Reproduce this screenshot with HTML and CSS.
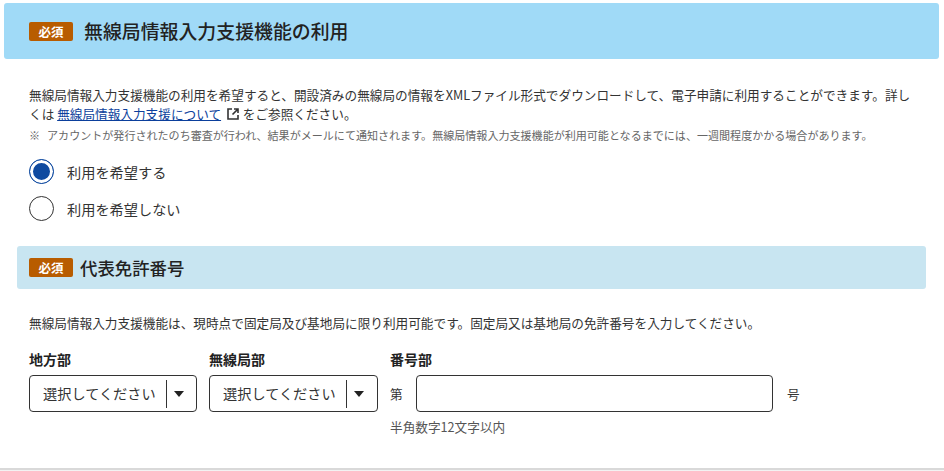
FILE: index.html
```html
<!DOCTYPE html>
<html lang="ja">
<head>
    <meta charset="UTF-8">
    <title>無線局情報入力支援機能の利用</title>
    <link rel="stylesheet" href="styles.css">
</head>
<body>
<div class="page">
    <div class="head-main">
        <span class="badge">必須</span>
        <h2 class="head-main-title">無線局情報入力支援機能の利用</h2>
    </div>

    <div class="intro">
        <p class="intro-text">無線局情報入力支援機能の利用を希望すると、開設済みの無線局の情報をXMLファイル形式でダウンロードして、電子申請に利用することができます。詳しくは <a class="link" href="#">無線局情報入力支援について</a>
            <svg class="ext-icon" viewBox="0 0 14 14" width="14" height="14" aria-hidden="true"><path d="M6 2H2v10h10V8M8 2h4v4M12 2 6.5 7.5" fill="none" stroke="#333" stroke-width="1.6"/></svg>
            をご参照ください。</p>
        <p class="note"><span class="note-mark">※</span>アカウントが発行されたのち審査が行われ、結果がメールにて通知されます。無線局情報入力支援機能が利用可能となるまでには、一週間程度かかる場合があります。</p>
    </div>

    <div class="radio-group">
        <label class="radio-row">
            <span class="radio radio-on"></span>
            利用を希望する
        </label>
        <label class="radio-row">
            <span class="radio"></span>
            利用を希望しない
        </label>
    </div>

    <div class="head-sub">
        <span class="badge">必須</span>
        <h3 class="head-sub-title">代表免許番号</h3>
    </div>

    <p class="sub-text">無線局情報入力支援機能は、現時点で固定局及び基地局に限り利用可能です。固定局又は基地局の免許番号を入力してください。</p>

    <div class="fields">
        <div class="field">
            <div class="field-label">地方部</div>
            <div class="select">
                <span class="select-text">選択してください</span>
                <span class="select-arrow"></span>
            </div>
        </div>
        <div class="field">
            <div class="field-label">無線局部</div>
            <div class="select select-wide">
                <span class="select-text">選択してください</span>
                <span class="select-arrow"></span>
            </div>
        </div>
        <div class="field">
            <div class="field-label">番号部</div>
            <div class="number-row">
                <span class="affix">第</span>
                <input class="number-input" type="text">
                <span class="affix">号</span>
            </div>
            <div class="hint">半角数字12文字以内</div>
        </div>
    </div>
</div>
<div class="page-end"></div>
</body>
</html>
```

FILE: styles.css
```css
html, body {
    margin: 0;
    padding: 0;
    background: #fff;
}
body {
    width: 944px;
    height: 471px;
    overflow: hidden;
    font-family: "Noto Sans CJK JP", "Noto Sans", sans-serif;
    color: #333;
}
p, h2, h3 {
    margin: 0;
}

.page {
    height: 468px;
    padding-top: 3px;
    box-sizing: border-box;
}
.page-end {
    height: 3px;
    background: #f2f2f2;
    border-top: 2px solid #d9d9d9;
    box-sizing: border-box;
}

.badge {
    width: 44px;
    height: 19px;
    flex: none;
    border-radius: 2px;
    background: #b85c00;
    color: #fff;
    font-size: 12.5px;
    font-weight: 700;
    line-height: 19px;
    text-align: center;
}

.head-main {
    display: flex;
    align-items: center;
    height: 56px;
    margin: 0 5px 0 4px;
    padding-left: 25px;
    border-radius: 3px;
    background: #a0daf7;
}
.head-main-title {
    margin-left: 11px;
    font-size: 18.9px;
    font-weight: 500;
    line-height: 1;
    color: #222;
}

.intro {
    padding: 26px 29px 0 29px;
}
.intro-text {
    font-size: 12.65px;
    line-height: 19px;
}
.link {
    color: #0b3f9c;
}
.ext-icon {
    width: 14px;
    height: 14px;
    margin: 0 0 -2px 2px;
}
.note {
    margin-top: 3px;
    font-size: 11.05px;
    line-height: 19px;
    color: #666;
}
.note-mark {
    margin-right: 7px;
}

.radio-group {
    display: flex;
    flex-direction: column;
    gap: 12px;
    margin-top: 14px;
    padding-left: 29px;
}
.radio-row {
    display: flex;
    align-items: center;
    gap: 13px;
    height: 25px;
    font-size: 14.2px;
}
.radio {
    width: 25px;
    height: 25px;
    box-sizing: border-box;
    border: 1.5px solid #333;
    border-radius: 50%;
    background: #fff;
}
.radio-on {
    border: 1.5px solid #0f4aa0;
    background: #0f4aa0;
    box-shadow: inset 0 0 0 3px #fff;
}

.head-sub {
    display: flex;
    align-items: center;
    height: 43px;
    margin: 25px 18px 0 17px;
    padding-left: 12px;
    border-radius: 3px;
    background: #c8e5f1;
}
.head-sub-title {
    margin-left: 7px;
    font-size: 17.4px;
    font-weight: 500;
    line-height: 1;
    color: #222;
}

.sub-text {
    margin-top: 24px;
    padding-left: 29px;
    font-size: 12.65px;
    line-height: 19px;
}

.fields {
    display: flex;
    gap: 12px;
    margin-top: 18px;
    padding-left: 29px;
}
.field-label {
    height: 25px;
    font-size: 14px;
    font-weight: 700;
    line-height: 18px;
    color: #222;
}
.select {
    display: flex;
    align-items: center;
    width: 168px;
    height: 37px;
    box-sizing: border-box;
    padding: 3.5px 0 3.5px 13px;
    border: 1.5px solid #333;
    border-radius: 4px;
    background: #fff;
}
.select-wide {
    width: 169px;
}
.select-text {
    width: 122.5px;
    height: 100%;
    flex: none;
    border-right: 1px solid #333;
    font-size: 14.2px;
    line-height: 27px;
}
.select-arrow {
    width: 0;
    height: 0;
    margin-left: 7px;
    border-top: 6px solid #222;
    border-left: 5.5px solid transparent;
    border-right: 5.5px solid transparent;
}
.number-row {
    display: flex;
    align-items: center;
    width: 410px;
}
.affix {
    font-size: 12.6px;
    color: #333;
}
.number-input {
    width: 357px;
    height: 37px;
    box-sizing: border-box;
    margin: 0 14px 0 13.5px;
    border: 1.5px solid #333;
    border-radius: 4px;
    background: #fff;
}
.hint {
    margin-top: 6px;
    font-size: 12.65px;
    line-height: 18px;
    color: #555;
}
```
